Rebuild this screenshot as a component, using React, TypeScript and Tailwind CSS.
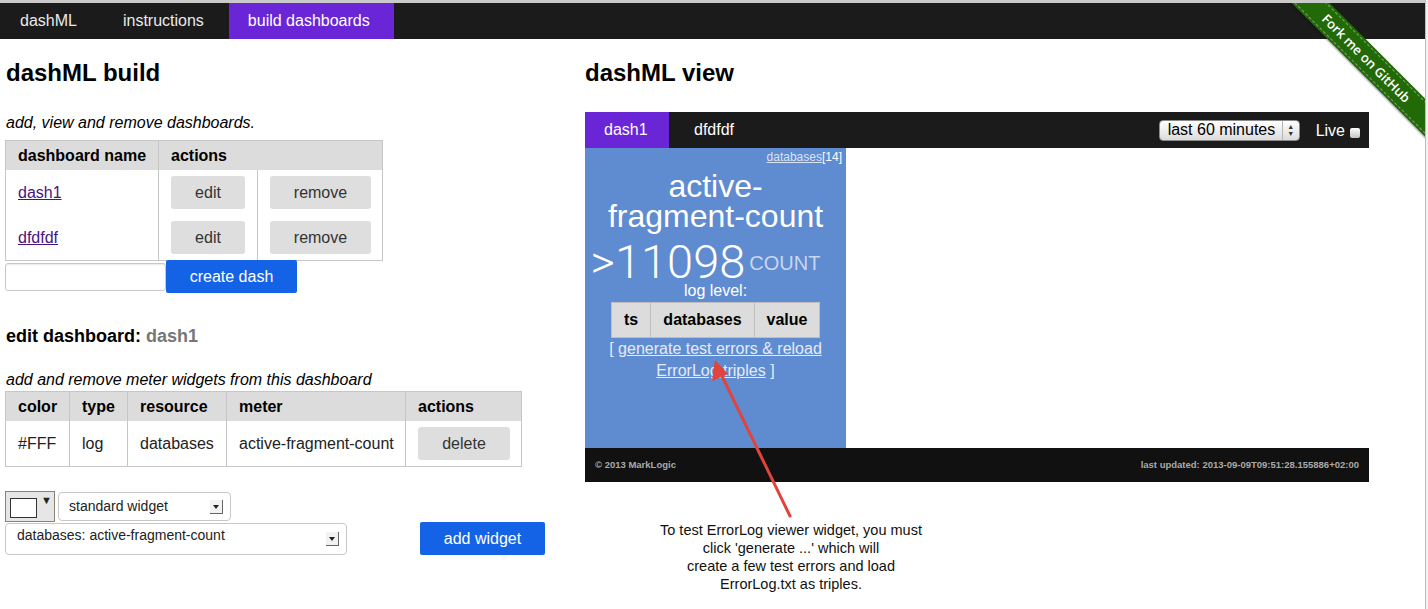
import React from "react";

const font = { fontFamily: '"Liberation Sans", Arial, sans-serif' };

function SelectArrow() {
  return (
    <span className="flex h-[14px] w-[13px] items-center justify-center border-r border-b border-[#666] bg-[#f2f2f2]">
      <span className="mt-[2px] h-0 w-0 border-x-[3px] border-t-[4px] border-x-transparent border-t-[#222]" />
    </span>
  );
}

function GrayButton({ label, w }: { label: string; w: string }) {
  return (
    <button className={`${w} h-[33px] rounded-[3px] bg-[#dedede] text-[16px] text-[#333]`}>{label}</button>
  );
}

function BlueButton({ label, w }: { label: string; w: string }) {
  return (
    <button className={`${w} h-[33px] rounded-[2px] bg-[#1463e6] text-[16px] text-white`}>{label}</button>
  );
}

function DashboardsTable() {
  const rows = ["dash1", "dfdfdf"];
  return (
    <div className="w-[378px] border border-[#c6c6c6] text-[16px]">
      <div className="flex h-[29px] bg-[#dcdcdc] font-bold text-black">
        <div className="flex w-[152px] items-center pl-[12px]">dashboard name</div>
        <div className="flex flex-1 items-center border-l border-[#c6c6c6] pl-[12px]">actions</div>
      </div>
      {rows.map((r) => (
        <div key={r} className="flex h-[45px]">
          <div className="flex w-[152px] items-center pl-[12px]">
            <a href="#" className="text-[#4a1280] underline">
              {r}
            </a>
          </div>
          <div className="flex w-[99px] items-center border-l border-[#c6c6c6] pl-[12px]">
            <GrayButton label="edit" w="w-[74px]" />
          </div>
          <div className="flex flex-1 items-center border-l border-[#c6c6c6] pl-[12px]">
            <GrayButton label="remove" w="w-[101px]" />
          </div>
        </div>
      ))}
    </div>
  );
}

function WidgetsTable() {
  return (
    <div className="w-[517px] border border-[#c6c6c6] text-[16px]">
      <div className="flex h-[29px] bg-[#dcdcdc] font-bold text-black">
        <div className="flex w-[63px] items-center pl-[12px]">color</div>
        <div className="flex w-[58px] items-center border-l border-[#c6c6c6] pl-[12px]">type</div>
        <div className="flex w-[99px] items-center border-l border-[#c6c6c6] pl-[12px]">resource</div>
        <div className="flex w-[179px] items-center border-l border-[#c6c6c6] pl-[12px]">meter</div>
        <div className="flex flex-1 items-center border-l border-[#c6c6c6] pl-[12px]">actions</div>
      </div>
      <div className="flex h-[45px] text-[#222]">
        <div className="flex w-[63px] items-center pl-[12px]">#FFF</div>
        <div className="flex w-[58px] items-center border-l border-[#c6c6c6] pl-[12px]">log</div>
        <div className="flex w-[99px] items-center border-l border-[#c6c6c6] pl-[12px]">databases</div>
        <div className="flex w-[179px] items-center border-l border-[#c6c6c6] pl-[12px]">active-fragment-count</div>
        <div className="flex flex-1 items-center border-l border-[#c6c6c6] pl-[12px]">
          <GrayButton label="delete" w="w-[92px]" />
        </div>
      </div>
    </div>
  );
}

function BuildColumn() {
  return (
    <div className="w-[585px] pl-[5px]">
      <h2 className="mt-[20px] pl-[1px] text-[24px] leading-[28px] font-bold">dashML build</h2>
      <p className="mt-[26px] mb-[7px] pl-[1px] text-[16px] leading-[20px] italic">add, view and remove dashboards.</p>
      <DashboardsTable />
      <div className="mt-[-1px] flex items-center">
        <input className="h-[28px] w-[161px] rounded-[3px] border border-[#c8c8c8] shadow-[inset_0_1px_1px_rgba(0,0,0,0.08)]" />
        <BlueButton label="create dash" w="w-[131px]" />
      </div>

      <h3 className="mt-[32px] pl-[1px] text-[18px] leading-[22px] font-bold">
        edit dashboard: <span className="text-[#777]">dash1</span>
      </h3>
      <p className="mt-[23px] mb-[1px] pl-[1px] text-[16px] leading-[20px] italic">
        add and remove meter widgets from this dashboard
      </p>
      <WidgetsTable />

      <div className="mt-[24px] flex items-start">
        <div className="flex h-[31px] w-[50px] items-start border border-[#8c8274] bg-[#e6e6e6] pt-[6px] pl-[4px]">
          <div className="h-[20px] w-[27px] border border-[#333] bg-white" />
          <span className="ml-[4px] mt-[-6px] text-[11px] leading-[16px] text-[#222]">▼</span>
        </div>
        <div className="ml-[3px] mt-[1px] flex h-[29px] w-[173px] items-center justify-between rounded-[4px] border border-[#c8c8c8] bg-white pr-[7px] pl-[10px] text-[14px] text-[#222]">
          <span>standard widget</span>
          <SelectArrow />
        </div>
      </div>
      <div className="flex items-center">
        <div className="flex h-[32px] w-[342px] items-center justify-between rounded-[4px] border border-[#c8c8c8] bg-white pr-[7px] pl-[11px] text-[14px] text-[#222]">
          <span className="mt-[-6px]">databases: active-fragment-count</span>
          <SelectArrow />
        </div>
        <div className="ml-[73px]">
          <BlueButton label="add widget" w="w-[125px]" />
        </div>
      </div>
    </div>
  );
}

function Widget() {
  return (
    <div className="flex h-[300px] w-[261px] flex-col items-center bg-[#5f8bd0] text-white">
      <div className="w-full pt-[2px] pr-[4px] text-right text-[12px] leading-[14px]">
        <a href="#" className="text-[#dbe4f4] underline">
          databases
        </a>
        <span className="text-white">[14]</span>
      </div>
      <div className="mt-[7px] text-center text-[32px] leading-[30px]">
        active-
        <br />
        fragment-count
      </div>
      <div className="mt-[9px] mr-[20px] flex h-[44px] items-end">
        <span
          className="text-[47px] leading-[44px] font-light"
          style={{ fontFamily: 'Roboto, "Liberation Sans", sans-serif' }}
        >
          &gt;11098
        </span>
        <span className="mb-[11px] ml-[4px] text-[20px] leading-[20px] text-[#c9d6ee]">COUNT</span>
      </div>
      <div className="mt-[-2px] text-[16px] leading-[18px]">log level:</div>
      <div className="mt-[2px] flex h-[36px] border border-[#bfbfbf] bg-[#dcdcdc] text-[16px] font-bold text-black">
        <div className="flex w-[38px] items-center justify-center">ts</div>
        <div className="flex w-[104px] items-center justify-center border-l border-[#bfbfbf]">databases</div>
        <div className="flex w-[65px] items-center justify-center border-l border-[#bfbfbf]">value</div>
      </div>
      <div className="text-center text-[16px] leading-[22px] text-[#e4ebf7]">
        [{" "}
        <a href="#" className="underline">
          generate test errors &amp; reload
          <br />
          ErrorLog triples
        </a>{" "}
        ]
      </div>
    </div>
  );
}

function ViewColumn() {
  return (
    <div className="w-[784px]">
      <h2 className="mt-[20px] text-[24px] leading-[28px] font-bold">dashML view</h2>
      <div className="mt-[25px]">
        <div className="flex h-[36px] items-center bg-[#1b1b1b] text-[16px] text-white">
          <div className="flex h-full w-[84px] items-center bg-[#6a25d6] pl-[19px]">dash1</div>
          <div className="pl-[25px]">dfdfdf</div>
          <div className="ml-auto flex items-center pr-[9px]">
            <div className="flex h-[21px] w-[141px] items-center rounded-[4px] border border-[#8a8a8a] bg-gradient-to-b from-white to-[#dcdcdc] pl-[8px] text-black">
              <span className="flex-1 leading-[18px]">last 60 minutes</span>
              <span className="flex h-full w-[17px] flex-col items-center justify-center border-l border-[#b5b5b5] text-[7px] leading-[7px] text-[#333]">
                <span>▲</span>
                <span>▼</span>
              </span>
            </div>
            <span className="ml-[16px] mt-[1px]">Live</span>
            <span className="ml-[5px] mt-[5px] h-[10px] w-[10px] rounded-[2px] bg-gradient-to-b from-white to-[#c4c4c4]" />
          </div>
        </div>
        <Widget />
        <div className="flex h-[34px] items-center justify-between bg-[#111] px-[10px] text-[9.5px] font-bold text-[#a9a9a9]">
          <span>© 2013 MarkLogic</span>
          <span>last updated: 2013-09-09T09:51:28.155886+02:00</span>
        </div>
      </div>
      <div className="mt-[39px] ml-[46px] w-[320px] text-center text-[14.5px] leading-[18px] text-[#111]">
        To test ErrorLog viewer widget, you must
        <br />
        click 'generate ...' which will
        <br />
        create a few test errors and load
        <br />
        ErrorLog.txt as triples.
      </div>
    </div>
  );
}

export default function App() {
  return (
    <div className="relative flex h-[609px] w-[1428px] overflow-hidden bg-white text-black" style={font}>
      <div className="w-[1425px] border-t-[3px] border-[#cacaca]">
        <nav className="flex h-[36px] items-center bg-[#1b1b1b] text-[16px] text-[#eaeaea]">
          <div className="flex h-full items-center pr-[24px] pl-[20px]">dashML</div>
          <div className="flex h-full items-center pr-[25px] pl-[22px]">instructions</div>
          <div className="flex h-full items-center bg-[#6a25d6] pr-[24px] pl-[19px] text-white">build dashboards</div>
        </nav>
        <div className="flex">
          <BuildColumn />
          <ViewColumn />
        </div>
      </div>
      <div className="w-[3px] border-l border-[#bdbdbd] bg-[#f2f2f2]" />

      {/* fork ribbon */}
      <div className="pointer-events-none absolute top-[3px] left-[1270px] h-[150px] w-[155px] overflow-hidden">
        <div
          className="absolute top-[42px] left-[-14px] flex h-[27px] w-[220px] rotate-45 items-center justify-center bg-[#226a07] shadow-[0_1px_2px_rgba(0,0,0,0.4)]"
          style={{ fontFamily: '"Open Sans", "Liberation Sans", sans-serif' }}
        >
          <div className="flex h-[23px] w-full items-center justify-center border-y border-dashed border-white/40 text-[13px] font-semibold text-white">
            Fork me on GitHub
          </div>
        </div>
      </div>

      {/* annotation arrow */}
      <svg className="pointer-events-none absolute top-0 left-0" width="1428" height="609">
        <line x1="790" y1="516" x2="721" y2="374" stroke="#e0443c" strokeWidth="3" strokeLinecap="round" />
        <polygon points="715,360 712,381 728,374" fill="#e0443c" />
      </svg>
    </div>
  );
}
